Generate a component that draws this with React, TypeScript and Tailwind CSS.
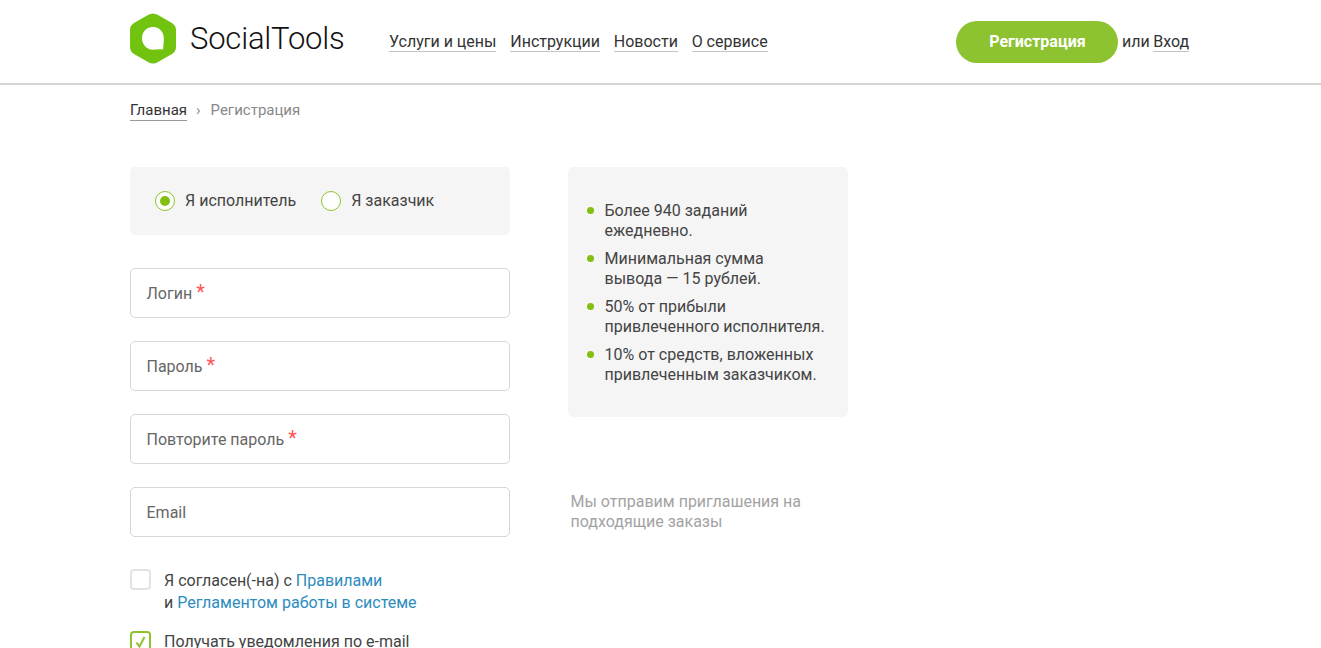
import React from 'react';

const font = { fontFamily: 'Roboto, sans-serif' };

const NavLink: React.FC<{ children: React.ReactNode }> = ({ children }) => (
  <a className="border-b border-[#c4c4c4] leading-[19px] text-[#333]">{children}</a>
);

const Field: React.FC<{ label: string; required?: boolean }> = ({ label, required }) => (
  <div className="flex h-[50px] w-[380px] items-center rounded-[5px] border border-[#d6d6d6] pl-[15.5px] pt-[1px] text-[#666]">
    {label}
    {required && <span className="ml-1 -mt-1 text-[20px] leading-none text-[#f55]">*</span>}
  </div>
);

const Radio: React.FC<{ label: string; checked?: boolean }> = ({ label, checked }) => (
  <div className="flex items-center gap-[10px]">
    <span className="flex h-5 w-5 items-center justify-center rounded-full border border-[#8dc230] bg-white">
      {checked && <span className="h-[10px] w-[10px] rounded-full bg-[#83bf12]" />}
    </span>
    <span>{label}</span>
  </div>
);

const benefits = [
  ['Более 940 заданий', 'ежедневно.'],
  ['Минимальная сумма', 'вывода — 15 рублей.'],
  ['50% от прибыли', 'привлеченного исполнителя.'],
  ['10% от средств, вложенных', 'привлеченным заказчиком.'],
];

const App: React.FC = () => {
  return (
    <div className="h-screen overflow-hidden bg-white text-[16px] text-[#444]" style={font}>
      <header className="h-[85px] border-b-2 border-[#d4d4d4]">
        <div className="flex h-[83px] pl-[130px]">
          <div className="flex w-[259px] items-center gap-[14px] pb-[7px]">
            <svg width="46" height="51" viewBox="0 0 46 51">
              <path
                d="M18 2 Q23 -1 28 2 L42 10 Q46 12.5 46 17 L46 34 Q46 38.5 42 41 L28 49 Q23 52 18 49 L4 41 Q0 38.5 0 34 L0 17 Q0 12.5 4 10 Z"
                fill="#72c30f"
              />
              <path
                d="M23 14 C29.2 14 33.8 18.8 33.8 25 C33.8 28.5 33.5 33 33 36.5 C30 36 27 36.7 23 36.7 C16.6 36.7 12 31.6 12 25 C12 18.8 16.6 14 23 14 Z"
                fill="#fff"
              />
            </svg>
            <span className="text-[31px] font-light leading-none tracking-[-0.2px] text-[#111]">SocialTools</span>
          </div>
          <nav className="flex items-center gap-[13.75px] text-[#333]">
            <NavLink>Услуги и цены</NavLink>
            <NavLink>Инструкции</NavLink>
            <NavLink>Новости</NavLink>
            <NavLink>О сервисе</NavLink>
          </nav>
          <div className="ml-[188.75px] flex items-center gap-[3.5px] text-[#333]">
            <button className="h-[42px] w-[162px] rounded-[21px] bg-[#8dc230] font-bold text-white">
              Регистрация
            </button>
            <span>или</span>
            <NavLink>Вход</NavLink>
          </div>
        </div>
      </header>

      <div className="mt-[14px] flex h-[23px] items-center gap-[9px] pl-[130px] text-[15px] text-[#888]">
        <a className="border-b border-[#999] leading-[19px] text-[#333]">Главная</a>
        <span>›</span>
        <span className="ml-[1px]">Регистрация</span>
      </div>

      <main className="flex gap-[58px] pl-[130px] pt-[45px]">
        <div className="w-[380px]">
          <div className="flex h-[68px] items-center gap-[25px] rounded-[5px] bg-[#f5f5f5] pl-[25px]">
            <Radio label="Я исполнитель" checked />
            <Radio label="Я заказчик" />
          </div>
          <div className="mt-[33px] flex flex-col gap-[23px]">
            <Field label="Логин" required />
            <Field label="Пароль" required />
            <Field label="Повторите пароль" required />
            <Field label="Email" />
          </div>
          <div className="mt-[33px] flex gap-[13px] leading-[22px]">
            <span className="-mt-[1px] h-[21px] w-[21px] shrink-0 rounded-[4px] border-2 border-[#e3e3e3]" />
            <div>
              Я согласен(-на) с <a className="text-[#2b8cbe]">Правилами</a>
              <br />и <a className="text-[#2b8cbe]">Регламентом работы в системе</a>
            </div>
          </div>
          <div className="mt-[17px] flex gap-[13px] leading-[22px]">
            <span className="flex h-[21px] w-[21px] shrink-0 items-center justify-center rounded-[4px] border-2 border-[#8dc230]">
              <svg width="11" height="12" viewBox="0 0 11 12" fill="none" stroke="#8dc230" strokeWidth="2">
                <path d="M1.5 6.5 L4.5 10.5 L9.5 1" />
              </svg>
            </span>
            <div>Получать уведомления по e-mail</div>
          </div>
        </div>

        <div className="w-[280px]">
          <ul className="flex h-[250px] flex-col gap-2 rounded-[5px] bg-[#f5f5f5] pl-[36.5px] pt-[34px] leading-5">
            {benefits.map(([a, b]) => (
              <li key={a} className="relative">
                <span className="absolute -left-[17.5px] top-[6px] h-[7px] w-[7px] rounded-full bg-[#83bf12]" />
                {a}
                <br />
                {b}
              </li>
            ))}
          </ul>
          <p className="ml-[2.5px] mt-[75px] leading-5 text-[#a3a3a3]">
            Мы отправим приглашения на
            <br />
            подходящие заказы
          </p>
        </div>
      </main>
    </div>
  );
};

export default App;
